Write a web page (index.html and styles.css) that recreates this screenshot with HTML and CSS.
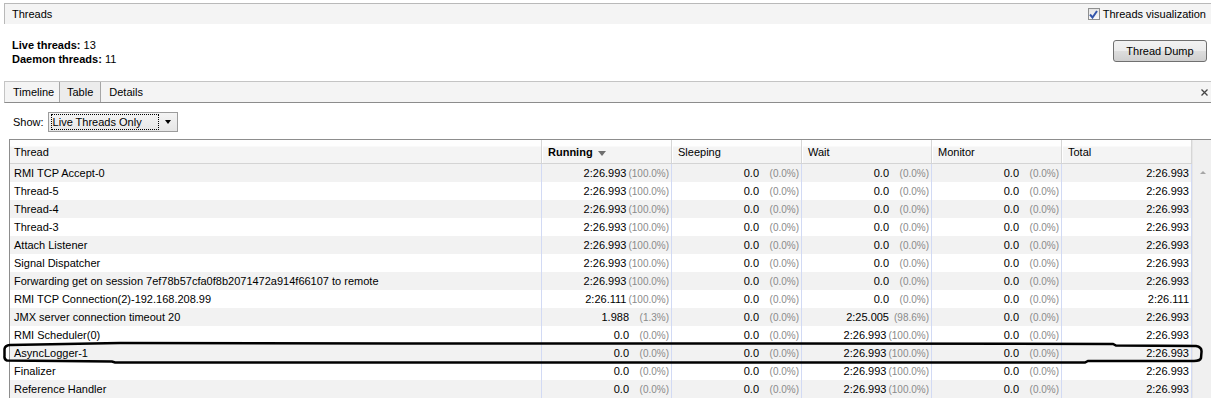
FILE: index.html
```html
<!DOCTYPE html>
<html>
	<head>
		<title>Threads</title>
		<link rel="stylesheet" href="styles.css">
	</head>
	<body>
		<div class="titlebar">
			<span>Threads</span>
			<label class="check">
				<span class="checkbox">
					<svg width="9" height="9" viewBox="0 0 9 9"><path d="M1 4.5 L3.5 7.5 L8 1" fill="none" stroke="#3355aa" stroke-width="2"/></svg>
				</span>
				Threads visualization
			</label>
		</div>

		<div class="summary">
			<div>
				<div><strong>Live threads:</strong> 13</div>
				<div><strong>Daemon threads:</strong> 11</div>
			</div>
			<button class="btn">Thread Dump</button>
		</div>

		<div class="tabs">
			<span class="tab">Timeline</span>
			<span class="tab active">Table</span>
			<span class="tab">Details</span>
			<span class="close">
				<svg width="7" height="7" viewBox="0 0 7 7"><path d="M0.5 0.5 L6.5 6.5 M6.5 0.5 L0.5 6.5" stroke="#444" stroke-width="1.3"/></svg>
			</span>
		</div>

		<div class="filter">
			<span>Show:</span>
			<span class="select">
				<span class="select-text">Live Threads Only</span>
				<span class="select-arrow"></span>
			</span>
		</div>

		<div class="grid">
			<div class="grid-main">
				<div class="row head">
					<div class="cell name">Thread</div>
					<div class="cell"><b>Running</b> <span class="sort"></span></div>
					<div class="cell">Sleeping</div>
					<div class="cell">Wait</div>
					<div class="cell">Monitor</div>
					<div class="cell">Total</div>
				</div>
				<div id="rows"></div>
			</div>
			<div class="scrollbar"><span class="up"></span></div>
		</div>

		<svg class="mark" width="1211" height="399" viewBox="0 0 1211 399">
			<path d="M10 345 L120 343 L400 343.5 L780 343.5 L1113 344 L1116 345.5 L1196 346 Q1202 347 1201.5 352 L1201 358 Q1200 361 1194 361 L1088 361 L1085 362.5 L115 362.5 L112 361.5 L7 360.5 Q4 359.5 4.5 356 L4.5 349 Q5 345.5 10 345 Z" fill="none" stroke="#000" stroke-width="2.5"/>
		</svg>

		<script>
			var data = [
				["RMI TCP Accept-0", "2:26.993", "100.0", "0.0", "0.0", "0.0", "0.0", "0.0", "0.0", "2:26.993"],
				["Thread-5", "2:26.993", "100.0", "0.0", "0.0", "0.0", "0.0", "0.0", "0.0", "2:26.993"],
				["Thread-4", "2:26.993", "100.0", "0.0", "0.0", "0.0", "0.0", "0.0", "0.0", "2:26.993"],
				["Thread-3", "2:26.993", "100.0", "0.0", "0.0", "0.0", "0.0", "0.0", "0.0", "2:26.993"],
				["Attach Listener", "2:26.993", "100.0", "0.0", "0.0", "0.0", "0.0", "0.0", "0.0", "2:26.993"],
				["Signal Dispatcher", "2:26.993", "100.0", "0.0", "0.0", "0.0", "0.0", "0.0", "0.0", "2:26.993"],
				["Forwarding get on session 7ef78b57cfa0f8b2071472a914f66107 to remote", "2:26.993", "100.0", "0.0", "0.0", "0.0", "0.0", "0.0", "0.0", "2:26.993"],
				["RMI TCP Connection(2)-192.168.208.99", "2:26.111", "100.0", "0.0", "0.0", "0.0", "0.0", "0.0", "0.0", "2:26.111"],
				["JMX server connection timeout 20", "1.988", "1.3", "0.0", "0.0", "2:25.005", "98.6", "0.0", "0.0", "2:26.993"],
				["RMI Scheduler(0)", "0.0", "0.0", "0.0", "0.0", "2:26.993", "100.0", "0.0", "0.0", "2:26.993"],
				["AsyncLogger-1", "0.0", "0.0", "0.0", "0.0", "2:26.993", "100.0", "0.0", "0.0", "2:26.993"],
				["Finalizer", "0.0", "0.0", "0.0", "0.0", "2:26.993", "100.0", "0.0", "0.0", "2:26.993"],
				["Reference Handler", "0.0", "0.0", "0.0", "0.0", "2:26.993", "100.0", "0.0", "0.0", "2:26.993"]
			];
			var html = "";
			data.forEach(function (d) {
				html += '<div class="row">';
				html += '<div class="cell name">' + d[0] + '</div>';
				for (var i = 1; i < 9; i += 2) {
					html += '<div class="cell num"><span>' + d[i] + '</span><span class="pct">(' + d[i + 1] + '%)</span></div>';
				}
				html += '<div class="cell num">' + d[9] + '</div>';
				html += '</div>';
			});
			document.getElementById("rows").innerHTML = html;
		</script>
	</body>
</html>
```

FILE: styles.css
```css
body {
	margin: 0;
	padding: 3px 0 0 4px;
	font-family: "Liberation Sans", Arial, sans-serif;
	font-size: 11px;
	color: #000;
	background: #fff;
	overflow: hidden;
	height: 396px;
}
.titlebar {
	height: 20px;
	border-top: 1px solid #b9b9b9;
	border-left: 1px solid #b9b9b9;
	background: #f4f4f4;
	display: flex;
	align-items: center;
	justify-content: space-between;
	padding: 0 5px 0 7px;
}
.check {
	display: flex;
	align-items: center;
	gap: 3px;
}
.checkbox {
	width: 12px;
	height: 12px;
	box-sizing: border-box;
	border: 1px solid #8e8f8f;
	background: linear-gradient(#e4e4e4, #fafafa);
	display: flex;
	align-items: center;
	justify-content: center;
}
.summary {
	display: flex;
	justify-content: space-between;
	margin-top: 14px;
	padding: 0 4px 0 8px;
	line-height: 14px;
}
.btn {
	margin-top: 2px;
	width: 94px;
	height: 22px;
	font-family: "Liberation Sans", Arial, sans-serif;
	font-size: 11px;
	color: #000;
	border: 1px solid #707070;
	border-radius: 3px;
	background: linear-gradient(#f2f2f2 0, #ebebeb 50%, #dddddd 51%, #cfcfcf 100%);
	padding: 0;
}
.tabs {
	margin-top: 15px;
	height: 20px;
	border-top: 1px solid #c4c4c4;
	border-bottom: 1px solid #8c8c8c;
	border-left: 1px solid #c4c4c4;
	background: #f4f4f4;
	display: flex;
	align-items: stretch;
}
.tab {
	display: flex;
	align-items: center;
	padding: 0 8px;
}
.tab:first-child {
	width: 38px;
}
.tab.active {
	background: #ececec;
	border-left: 1px solid #a6a6a6;
	border-right: 1px solid #a6a6a6;
	padding: 0 7px;
}
.close {
	margin-left: auto;
	display: flex;
	align-items: center;
	padding-right: 3px;
}
.filter {
	margin-top: 9px;
	padding-left: 9px;
	display: flex;
	align-items: center;
	gap: 4px;
}
.select {
	width: 130px;
	height: 20px;
	box-sizing: border-box;
	border: 1px solid #9c9c9c;
	background: linear-gradient(#f4f4f4, #e6e6e6);
	display: flex;
	align-items: center;
	padding: 0 0 0 2px;
}
.select-text {
	width: 108px;
	height: 16px;
	box-sizing: border-box;
	border: 1px dotted #000;
	line-height: 14px;
	padding-left: 1px;
}
.select-arrow {
	margin-left: 6px;
	width: 0;
	height: 0;
	border-left: 3.5px solid transparent;
	border-right: 3.5px solid transparent;
	border-top: 4px solid #000;
}
.grid {
	margin-top: 7px;
	margin-left: 5px;
	border-top: 1px solid #8d8d8d;
	border-left: 1px solid #8d8d8d;
	display: flex;
}
.grid-main {
	width: 1182px;
}
.row {
	display: grid;
	grid-template-columns: 532px repeat(5, 130px);
	height: 18px;
	line-height: 17px;
}
.row:nth-child(odd) {
	background: #f2f2f2;
}
.cell {
	border-right: 1px solid #d2daf4;
	padding: 1px 2px 0 4px;
	white-space: nowrap;
	overflow: hidden;
}
.num {
	display: flex;
	justify-content: flex-end;
}
.pct {
	min-width: 38px;
	margin-left: 2px;
	text-align: right;
	font-size: 10px;
	color: #8a8a8a;
}
.row.head {
	height: 23px;
	line-height: 22px;
	border-bottom: 1px solid #d4d4d4;
	background: linear-gradient(#fefefe 0, #fefefe 6px, #f4f4f4 7px, #f4f4f4 100%);
}
.row.head .cell {
	border-right: 1px solid #d6d6d6;
	border-left: 1px solid #fff;
	padding-left: 5px;
}
.row.head .cell.name {
	border-left: 0;
	padding-left: 4px;
}
.sort {
	display: inline-block;
	vertical-align: middle;
	margin-left: 2px;
	width: 0;
	height: 0;
	border-left: 4px solid transparent;
	border-right: 4px solid transparent;
	border-top: 5px solid #6f6f6f;
}
.scrollbar {
	width: 19px;
	background: #f0f0f0;
	border-left: 1px solid #e6e6e6;
	position: relative;
}
.up {
	position: absolute;
	left: 7px;
	top: 31px;
	width: 0;
	height: 0;
	border-left: 3px solid transparent;
	border-right: 3px solid transparent;
	border-bottom: 3px solid #a6a6a6;
}
.mark {
	position: absolute;
	left: 0;
	top: 0;
	pointer-events: none;
}
```
